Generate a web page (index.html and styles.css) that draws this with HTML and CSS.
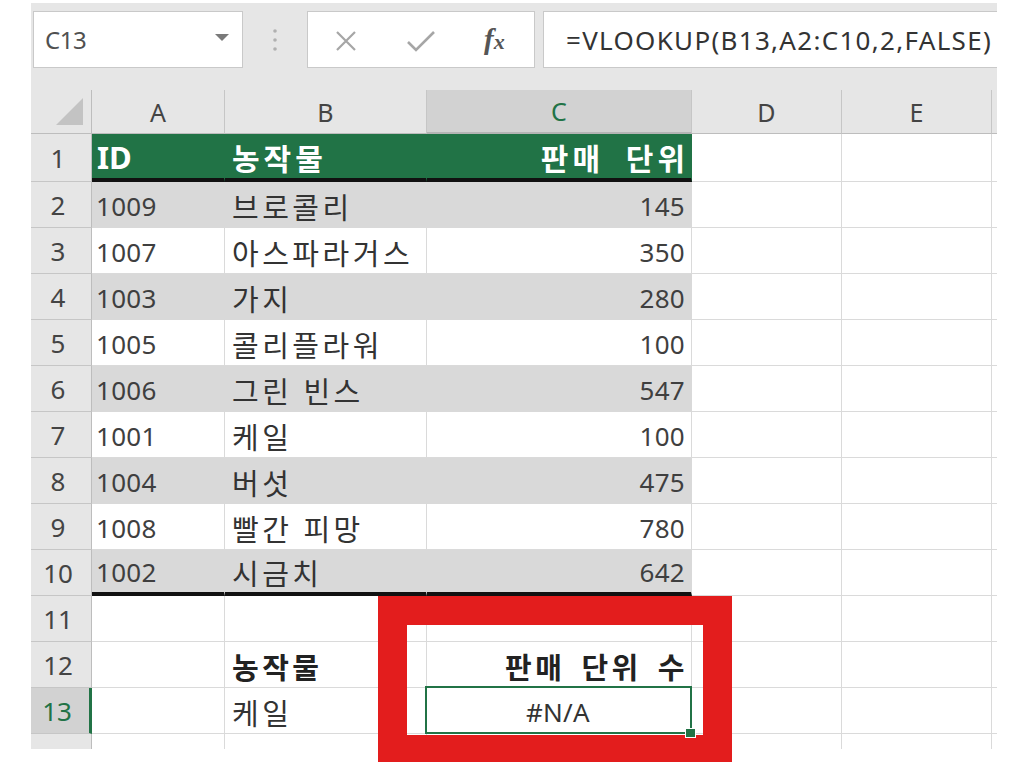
FILE: index.html
```html
<!DOCTYPE html>
<html lang="ko">
<head>
<meta charset="utf-8">
<title>VLOOKUP #N/A</title>
<link rel="stylesheet" href="styles.css">
</head>
<body>
<div class="app">
  <div class="fbar">
    <div class="namebox">
      <span class="nb-text">C13</span>
      <svg class="nb-arrow" width="16" height="9" viewBox="0 0 16 9"><polygon points="1,1 15,1 8,8" fill="#7a7a7a"/></svg>
    </div>
    <div class="sep">
      <svg width="6" height="24" viewBox="0 0 6 24"><circle cx="3" cy="3" r="1.8" fill="#b0b0b0"/><circle cx="3" cy="12" r="1.8" fill="#b0b0b0"/><circle cx="3" cy="21" r="1.8" fill="#b0b0b0"/></svg>
    </div>
    <div class="controls">
      <svg class="ic-x" width="24" height="20" viewBox="0 0 24 20"><path d="M3 1 L21 19 M21 1 L3 19" stroke="#a6a6a6" stroke-width="2.2" fill="none"/></svg>
      <svg class="ic-check" width="30" height="24" viewBox="0 0 30 24"><path d="M2 13 L10 21 L28 3" stroke="#a6a6a6" stroke-width="2.6" fill="none"/></svg>
      <span class="fx">f<span class="fx-x">x</span></span>
    </div>
    <div class="formula">=VLOOKUP(B13,A2:C10,2,FALSE)</div>
  </div>

  <div class="sheet">
    <div class="corner"><svg width="61" height="44" viewBox="0 0 61 44"><polygon points="52,8 52,35 25,35" fill="#c3c3c3"/></svg></div>
    <div class="ch">A</div>
    <div class="ch">B</div>
    <div class="ch ch-sel">C</div>
    <div class="ch">D</div>
    <div class="ch">E</div>
    <div class="ch"></div>

    <div class="rh">1</div>
    <div class="c hd hd-id">ID</div>
    <div class="c hd">농작물</div>
    <div class="c hd r">판매 단위</div>
    <div class="c"></div><div class="c"></div><div class="c"></div>

    <div class="rh">2</div>
    <div class="c g num">1009</div>
    <div class="c g ko">브로콜리</div>
    <div class="c g num r">145</div>
    <div class="c"></div><div class="c"></div><div class="c"></div>

    <div class="rh">3</div>
    <div class="c num">1007</div>
    <div class="c ko">아스파라거스</div>
    <div class="c num r">350</div>
    <div class="c"></div><div class="c"></div><div class="c"></div>

    <div class="rh">4</div>
    <div class="c g num">1003</div>
    <div class="c g ko">가지</div>
    <div class="c g num r">280</div>
    <div class="c"></div><div class="c"></div><div class="c"></div>

    <div class="rh">5</div>
    <div class="c num">1005</div>
    <div class="c ko">콜리플라워</div>
    <div class="c num r">100</div>
    <div class="c"></div><div class="c"></div><div class="c"></div>

    <div class="rh">6</div>
    <div class="c g num">1006</div>
    <div class="c g ko">그린 빈스</div>
    <div class="c g num r">547</div>
    <div class="c"></div><div class="c"></div><div class="c"></div>

    <div class="rh">7</div>
    <div class="c num">1001</div>
    <div class="c ko">케일</div>
    <div class="c num r">100</div>
    <div class="c"></div><div class="c"></div><div class="c"></div>

    <div class="rh">8</div>
    <div class="c g num">1004</div>
    <div class="c g ko">버섯</div>
    <div class="c g num r">475</div>
    <div class="c"></div><div class="c"></div><div class="c"></div>

    <div class="rh">9</div>
    <div class="c num">1008</div>
    <div class="c ko">빨간 피망</div>
    <div class="c num r">780</div>
    <div class="c"></div><div class="c"></div><div class="c"></div>

    <div class="rh">10</div>
    <div class="c g last num">1002</div>
    <div class="c g last ko">시금치</div>
    <div class="c g last num r">642</div>
    <div class="c"></div><div class="c"></div><div class="c"></div>

    <div class="rh">11</div>
    <div class="c"></div><div class="c"></div><div class="c"></div>
    <div class="c"></div><div class="c"></div><div class="c"></div>

    <div class="rh">12</div>
    <div class="c"></div>
    <div class="c ko b">농작물</div>
    <div class="c ko b r">판매 단위 수</div>
    <div class="c"></div><div class="c"></div><div class="c"></div>

    <div class="rh rh-sel">13</div>
    <div class="c"></div>
    <div class="c ko">케일</div>
    <div class="c num ctr sel">#N/A</div>
    <div class="c"></div><div class="c"></div><div class="c"></div>

    <div class="rh"></div>
    <div class="c"></div><div class="c"></div><div class="c"></div>
    <div class="c"></div><div class="c"></div><div class="c"></div>
  </div>
</div>
<div class="callout"></div>
</body>
</html>
```

FILE: styles.css
```css
* { box-sizing: border-box; }

html, body {
  margin: 0;
  padding: 0;
  background: #ffffff;
}

body {
  width: 1024px;
  height: 762px;
  position: relative;
  overflow: hidden;
  font-family: "Noto Sans", "Noto Sans CJK KR", sans-serif;
  color: #333333;
}

.app {
  margin: 3px 0 0 31px;
  width: 966px;
  height: 746px;
  background: #e6e6e6;
  overflow: hidden;
  display: flex;
  flex-direction: column;
}

/* ---------- formula bar ---------- */
.fbar {
  height: 87px;
  flex: none;
  display: flex;
  align-items: flex-start;
  padding: 8px 0 0 2px;
}

.namebox {
  width: 210px;
  height: 57px;
  background: #ffffff;
  border: 1px solid #c9c9c9;
  display: flex;
  align-items: center;
  justify-content: space-between;
  padding: 0 12px 0 11px;
  flex: none;
}

.nb-text {
  font-size: 24px;
  color: #505050;
  letter-spacing: -0.5px;
}

.nb-arrow { margin-top: -4px; }

.sep {
  width: 64px;
  height: 57px;
  flex: none;
  display: flex;
  align-items: center;
  justify-content: center;
}

.controls {
  width: 228px;
  height: 57px;
  flex: none;
  background: #ffffff;
  border: 1px solid #c9c9c9;
  display: flex;
  align-items: center;
  padding-left: 26px;
}

.ic-x { margin-top: 2px; }
.ic-check { margin-left: 48px; margin-top: 2px; }

.fx {
  margin-left: 48px;
  font-family: "Liberation Serif", "DejaVu Serif", serif;
  font-style: italic;
  font-weight: bold;
  font-size: 29px;
  color: #555555;
  line-height: 1;
}

.fx-x { font-size: 22px; }

.formula {
  margin-left: 8px;
  width: 520px;
  height: 57px;
  flex: none;
  background: #ffffff;
  border: 1px solid #c9c9c9;
  display: flex;
  align-items: center;
  padding-left: 22px;
  font-size: 26px;
  color: #333333;
  white-space: nowrap;
  letter-spacing: 1.3px;
}

/* ---------- sheet ---------- */
.sheet {
  flex: 1;
  display: grid;
  grid-template-columns: 61px 133px 202px 265px 150px 150px 1fr;
  grid-template-rows: 44px 48px repeat(13, 46px);
  overflow: hidden;
  background: #ffffff;
}

.corner {
  background: #e6e6e6;
  border-right: 1px solid #bdbdbd;
  border-bottom: 1px solid #bdbdbd;
}

.corner svg { display: block; }

.ch {
  background: #e6e6e6;
  border-right: 1px solid #c6c6c6;
  border-bottom: 1px solid #bdbdbd;
  display: flex;
  align-items: center;
  justify-content: center;
  font-size: 25px;
  color: #444444;
}

.ch-sel {
  background: #d2d2d2;
  color: #217346;
  border-bottom: 2px solid #b5b5b5;
}

.rh {
  background: #e6e6e6;
  border-right: 1px solid #bdbdbd;
  border-bottom: 1px solid #c6c6c6;
  display: flex;
  align-items: center;
  justify-content: center;
  padding-right: 6px;
  font-size: 26px;
  color: #444444;
}

.rh-sel {
  background: #d2d2d2;
  color: #217346;
  border-right: 3px solid #217346;
}

.c {
  position: relative;
  border-right: 1px solid #dadada;
  border-bottom: 1px solid #dadada;
  background: #ffffff;
  display: flex;
  align-items: center;
  padding: 2px 6px 0 6px;
  font-size: 26px;
  color: #333333;
  white-space: nowrap;
}

.num { color: #3f3f3f; padding-left: 4px; letter-spacing: 0.3px; }

.ko {
  padding-left: 7px;
  font-size: 29px;
  letter-spacing: 3.5px;
  word-spacing: 0;
}

.hd {
  background: #217346;
  color: #ffffff;
  font-weight: bold;
  font-size: 30px;
  letter-spacing: 4px;
  word-spacing: 10px;
  border-right-color: #217346;
  border-bottom: 4px solid #111111;
  padding-left: 7px;
  padding-right: 2px;
}

.hd-id { font-size: 31px; letter-spacing: 0; padding-left: 5px; }

.g {
  background: #d9d9d9;
  border-right-color: #d9d9d9;
  border-bottom-color: #d9d9d9;
}

.last { border-bottom: 4px solid #111111; }

.r { justify-content: flex-end; }
.ctr { justify-content: center; color: #333333; }

.b {
  font-weight: bold;
  color: #222222;
  font-size: 29px;
  letter-spacing: 3.5px;
  word-spacing: 5px;
  padding-right: 3px;
}

.sel::after {
  content: "";
  position: absolute;
  left: -2px;
  top: -2px;
  right: -1px;
  bottom: -1px;
  border: 2px solid #217346;
}

.sel::before {
  content: "";
  position: absolute;
  right: -5px;
  bottom: -5px;
  width: 9px;
  height: 8px;
  background: #217346;
  border: 1px solid #ffffff;
  z-index: 1;
}

/* ---------- red annotation ---------- */
.callout {
  position: absolute;
  left: 378px;
  top: 596px;
  width: 354px;
  height: 168px;
  border: 29px solid #e31d1d;
}
```
